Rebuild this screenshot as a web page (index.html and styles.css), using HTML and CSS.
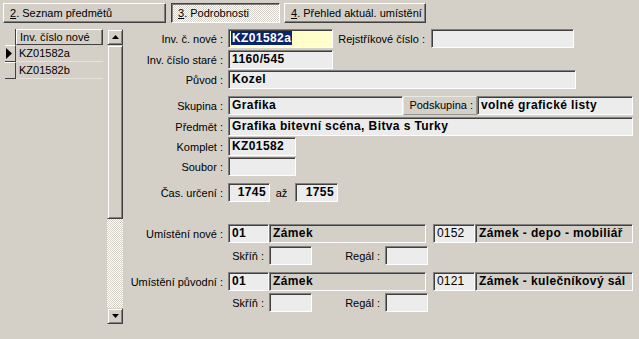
FILE: index.html
```html
<!DOCTYPE html>
<html lang="cs">
<head>
    <meta charset="UTF-8">
    <title>Podrobnosti předmětu</title>
    <link rel="stylesheet" href="styles.css">
</head>
<body>

<div class="tabs">
    <div class="tab tab-list"><u>2</u>. Seznam předmětů</div>
    <div class="tab tab-detail active"><u>3</u>. Podrobnosti</div>
    <div class="tab tab-place"><u>4</u>. Přehled aktuál. umístění</div>
</div>

<div class="main">
    <div class="list">
        <div class="list-row head">
            <div class="ind"></div>
            <div class="cell">Inv. číslo nové</div>
        </div>
        <div class="list-row">
            <div class="ind btn">
                <svg width="6" height="11" viewBox="0 0 6 11"><polygon points="0,0 6,5.5 0,11" fill="#000"/></svg>
            </div>
            <div class="cell">KZ01582a</div>
        </div>
        <div class="list-row">
            <div class="ind btn"></div>
            <div class="cell">KZ01582b</div>
        </div>
    </div>

    <div class="scroll">
        <div class="sb-btn">
            <svg width="7" height="4" viewBox="0 0 7 4"><polygon points="3.5,0 7,4 0,4" fill="#000"/></svg>
        </div>
        <div class="sb-thumb"></div>
        <div class="sb-track"></div>
        <div class="sb-btn">
            <svg width="7" height="4" viewBox="0 0 7 4"><polygon points="0,0 7,0 3.5,4" fill="#000"/></svg>
        </div>
    </div>

    <div class="form">
        <div class="row">
            <div class="lbl">Inv. č. nové :</div>
            <div class="fld yellow w105"><span class="sel">KZ01582a</span></div>
            <div class="lbl lbl-rej">Rejstříkové číslo :</div>
            <div class="fld w143"></div>
        </div>
        <div class="row g2">
            <div class="lbl">Inv. číslo staré :</div>
            <div class="fld w105">1160/545</div>
        </div>
        <div class="row g1">
            <div class="lbl">Původ :</div>
            <div class="fld w348">Kozel</div>
        </div>
        <div class="row g7">
            <div class="lbl">Skupina :</div>
            <div class="fld w175">Grafika</div>
            <div class="lbl lbl-raised">Podskupina :</div>
            <div class="fld w156">volné grafické listy</div>
        </div>
        <div class="row g2">
            <div class="lbl">Předmět :</div>
            <div class="fld w405">Grafika bitevní scéna, Bitva s Turky</div>
        </div>
        <div class="row g1">
            <div class="lbl">Komplet :</div>
            <div class="fld w68">KZ01582</div>
        </div>
        <div class="row g1">
            <div class="lbl">Soubor :</div>
            <div class="fld w68"></div>
        </div>
        <div class="row g7">
            <div class="lbl">Čas. určení :</div>
            <div class="fld w42 num">1745</div>
            <div class="lbl-az">až</div>
            <div class="fld w43 num">1755</div>
        </div>

        <div class="row g22">
            <div class="lbl">Umístění nové :</div>
            <div class="fld w41">01</div>
            <div class="fld w157 dark">Zámek</div>
            <div class="fld w42 thin code">0152</div>
            <div class="fld w158 dark">Zámek - depo - mobiliář</div>
        </div>
        <div class="row g3">
            <div class="lbl lbl-sub">Skříň :</div>
            <div class="fld w43"></div>
            <div class="lbl lbl-regal">Regál :</div>
            <div class="fld w43"></div>
        </div>
        <div class="row g7">
            <div class="lbl">Umístění původní :</div>
            <div class="fld w41">01</div>
            <div class="fld w157 dark">Zámek</div>
            <div class="fld w42 thin code">0121</div>
            <div class="fld w158 dark">Zámek - kulečníkový sál</div>
        </div>
        <div class="row g2">
            <div class="lbl lbl-sub">Skříň :</div>
            <div class="fld w43"></div>
            <div class="lbl lbl-regal">Regál :</div>
            <div class="fld w43"></div>
        </div>
    </div>
</div>

</body>
</html>
```

FILE: styles.css
```css
:root {
    --face: #d4d0c8;
    --shadow: #808080;
    --dark: #404040;
    --light: #ffffff;
    --field: #ececec;
    --dither: repeating-conic-gradient(#ffffff 0 25%, #d4d0c8 0 50%) 0 0 / 2px 2px;
}

body {
    margin: 0;
    width: 639px;
    height: 339px;
    overflow: hidden;
    background: var(--face);
    font-family: "Liberation Sans", Arial, sans-serif;
    font-size: 11px;
    color: #000;
}

/* záložky */
.tabs {
    display: flex;
    padding: 3px 0 0 3px;
}

.tab {
    height: 20px;
    box-sizing: border-box;
    border: 1px solid;
    border-color: var(--light) var(--dark) var(--dark) var(--light);
    box-shadow: inset -1px -1px var(--shadow);
    padding-left: 6px;
    line-height: 18px;
    white-space: nowrap;
}

.tab-list { width: 163px; margin-right: 5px; }
.tab-detail { width: 109px; margin-right: 4px; }
.tab-place { width: 142px; }

.tab.active {
    border-color: var(--dark) var(--light) var(--light) var(--dark);
    box-shadow: inset 1px 1px var(--shadow);
    background: var(--dither);
}

.main {
    display: flex;
    margin-top: 6px;
}

/* seznam */
.list {
    width: 98px;
    margin-left: 5px;
}

.list-row {
    display: flex;
    height: 17px;
}

.list-row.head { height: 16px; }

.ind {
    width: 11px;
    box-sizing: border-box;
    border-right: 1px solid var(--dark);
    display: flex;
    align-items: center;
    padding-left: 1px;
}

.ind.btn {
    border-top: 1px solid var(--light);
    border-bottom: 1px solid var(--dark);
}

.cell {
    flex: 1;
    box-sizing: border-box;
    padding-left: 3px;
    line-height: 16px;
    border-bottom: 1px solid #e6e3dd;
}

.head .cell {
    border-left: 1px solid var(--light);
    border-top: 1px solid var(--light);
    border-right: 1px solid var(--dark);
    border-bottom: 1px solid var(--dark);
    box-shadow: inset -1px 0 var(--shadow);
    line-height: 14px;
}

/* posuvník */
.scroll {
    width: 16px;
    margin-left: 4px;
    height: 295px;
    display: flex;
    flex-direction: column;
}

.sb-btn, .sb-thumb {
    box-sizing: border-box;
    border: 1px solid;
    border-color: var(--face) var(--dark) var(--dark) var(--face);
    box-shadow: inset 1px 1px var(--light), inset -1px -1px var(--shadow);
    background: var(--face);
}

.sb-btn {
    height: 16px;
    display: flex;
    align-items: center;
    justify-content: center;
}

.sb-thumb { height: 174px; }

.sb-track {
    flex: 1;
    background: var(--dither);
}

/* formulář */
.form {
    flex: 1;
}

.row {
    display: flex;
    align-items: center;
    height: 19px;
}

.g1 { margin-top: 1px; }
.g2 { margin-top: 2px; }
.g3 { margin-top: 3px; }
.g7 { margin-top: 7px; }
.g22 { margin-top: 22px; }

.lbl {
    width: 105px;
    box-sizing: border-box;
    padding-right: 5px;
    text-align: right;
    white-space: nowrap;
}

.lbl-rej { width: 98px; padding-right: 6px; }
.lbl-sub { width: 146px; }
.lbl-regal { width: 73px; }

.lbl-raised {
    width: 74px;
    height: 19px;
    line-height: 17px;
    border: 1px solid;
    border-color: #eae8e3 #9a9893 #9a9893 #eae8e3;
    padding-right: 3px;
}

.lbl-az {
    width: 25px;
    text-align: center;
    padding-right: 2px;
    box-sizing: border-box;
}

.fld {
    height: 19px;
    box-sizing: border-box;
    border: 1px solid;
    border-color: var(--shadow) var(--light) var(--light) var(--shadow);
    box-shadow: inset 1px 1px var(--dark);
    background: var(--field);
    padding: 0 3px;
    font-size: 12px;
    font-weight: bold;
    letter-spacing: 0.4px;
    line-height: 17px;
    white-space: nowrap;
    overflow: hidden;
}

.fld.yellow { background: #ffffcc; padding-left: 2px; }
.fld.dark { background: var(--face); }
.fld.thin { font-weight: normal; letter-spacing: 0.2px; }
.fld.num { text-align: right; }
.fld.code { margin-left: 7px; }

.sel {
    background: #0a246a;
    color: #fff;
    padding: 0 1px;
}

.w41 { width: 41px; }
.w42 { width: 42px; }
.w43 { width: 43px; }
.w68 { width: 68px; }
.w105 { width: 105px; }
.w143 { width: 143px; }
.w156 { width: 156px; }
.w157 { width: 157px; }
.w158 { width: 158px; }
.w175 { width: 175px; }
.w348 { width: 348px; }
.w405 { width: 405px; }
```
